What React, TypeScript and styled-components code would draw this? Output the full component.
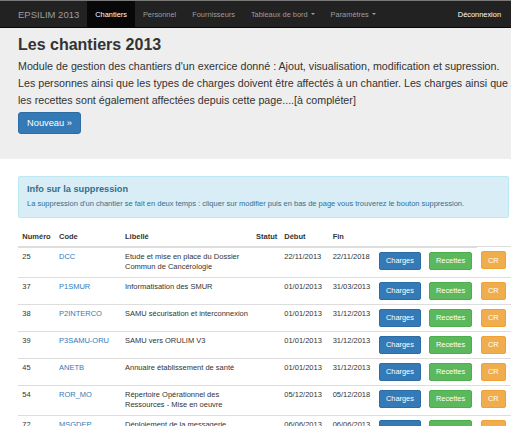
import React from "react";
import styled, { createGlobalStyle } from "styled-components";

const Global = createGlobalStyle`
  html, body { margin: 0; padding: 0; background: #fff; }
  body {
    font-family: "Liberation Sans", Helvetica, Arial, sans-serif;
    color: #333;
    overflow: hidden;
    width: 511px;
  }
  * { box-sizing: border-box; }
`;

const Navbar = styled.nav`
  display: flex;
  align-items: stretch;
  height: 28px;
  background: #222;
  border-top: 1px solid #7a7a7a;
  border-bottom: 1px solid #080808;
  padding: 0 10px 0 18px;
  font-size: 7.4px;
`;

const Brand = styled.div`
  display: flex;
  align-items: center;
  font-size: 9.5px;
  color: #9d9d9d;
  padding-right: 8px;
`;

const NavList = styled.ul`
  display: flex;
  list-style: none;
  margin: 0;
  padding: 0;
  flex: 1;
`;

const NavItem = styled.li<{ $active?: boolean }>`
  display: flex;
  align-items: center;
  padding: 0 8px;
  color: ${(p) => (p.$active ? "#fff" : "#9d9d9d")};
  background: ${(p) => (p.$active ? "#080808" : "transparent")};
`;

const Caret = styled.span`
  display: inline-block;
  width: 0;
  height: 0;
  margin-left: 3px;
  border-top: 2px solid currentColor;
  border-left: 2px solid transparent;
  border-right: 2px solid transparent;
`;

const Logout = styled.div`
  display: flex;
  align-items: center;
  color: #fff;
`;

const Jumbotron = styled.section`
  background: #eee;
  padding: 7px 0 25px 18px;
`;

const Title = styled.h1`
  margin: 0;
  font-size: 16px;
  line-height: 20px;
  font-weight: bold;
  color: #333;
`;

const Lead = styled.p`
  margin: 3px 0 3px;
  font-size: 10.7px;
  line-height: 17px;
`;

const BigButton = styled.button`
  display: inline-flex;
  align-items: center;
  height: 22px;
  padding: 0 8px;
  font-family: inherit;
  font-size: 9.3px;
  color: #fff;
  background: #337ab7;
  border: 1px solid #2e6da4;
  border-radius: 3px;
`;

const Container = styled.main`
  padding: 17px 2px 0 18px;
`;

const Alert = styled.div`
  background: #d9edf7;
  border: 1px solid #bce8f1;
  border-radius: 2px;
  padding: 7px 8px 8px;
  color: #31708f;
  margin-bottom: 11px;
`;

const AlertTitle = styled.h4`
  margin: 0 0 3px;
  font-size: 9.2px;
  line-height: 11px;
  font-weight: bold;
`;

const AlertText = styled.p`
  margin: 0;
  font-size: 7.5px;
  line-height: 11px;
`;

const Table = styled.table`
  table-layout: fixed;
  border-collapse: collapse;
  width: 499px;
  font-size: 7.5px;
  line-height: 10.5px;
`;

const Th = styled.th`
  text-align: left;
  font-weight: bold;
  padding: 3px 4.3px;
  border-bottom: 2px solid #ddd;
  vertical-align: bottom;
  white-space: nowrap;
`;

const Td = styled.td<{ $tight?: boolean }>`
  padding: ${(p) => (p.$tight ? "4px 0 4px 4.3px" : "4px 4.3px")};
  border-top: 1px solid #ddd;
  vertical-align: top;
`;

const Link = styled.a`
  color: #337ab7;
  text-decoration: none;
`;

const variants = {
  primary: { bg: "#337ab7", border: "#2e6da4" },
  success: { bg: "#5cb85c", border: "#4cae4c" },
  warning: { bg: "#f0ad4e", border: "#eea236" },
};

const Btn = styled.button<{ $variant: keyof typeof variants }>`
  display: inline-flex;
  align-items: center;
  justify-content: center;
  height: 18px;
  padding: 0 6px;
  font-family: inherit;
  font-size: 7.4px;
  color: #fff;
  background: ${(p) => variants[p.$variant].bg};
  border: 1px solid ${(p) => variants[p.$variant].border};
  border-radius: 2px;
  white-space: nowrap;
`;

const rows = [
  { num: 25, code: "DCC", label: "Etude et mise en place du Dossier Commun de Cancérologie", start: "22/11/2013", end: "22/11/2018" },
  { num: 37, code: "P1SMUR", label: "Informatisation des SMUR", start: "01/01/2013", end: "31/03/2013" },
  { num: 38, code: "P2INTERCO", label: "SAMU sécurisation et interconnexion", start: "01/01/2013", end: "31/12/2013" },
  { num: 39, code: "P3SAMU-ORU", label: "SAMU vers ORULIM V3", start: "01/01/2013", end: "31/12/2013" },
  { num: 45, code: "ANETB", label: "Annuaire établissement de santé", start: "01/01/2013", end: "31/12/2013" },
  { num: 54, code: "ROR_MO", label: "Répertoire Opérationnel des Ressources - Mise en oeuvre", start: "05/12/2013", end: "05/12/2018" },
  { num: 72, code: "MSGDEP", label: "Déploiement de la messagerie sécurisée", start: "06/06/2013", end: "06/06/2013" },
];

const colWidths = [36.7, 66, 131, 28.3, 48.4, 46.3, 50, 52, 40.3];

export default function App() {
  return (
    <>
      <Global />
      <Navbar>
        <Brand>EPSILIM 2013</Brand>
        <NavList>
          <NavItem $active>Chantiers</NavItem>
          <NavItem>Personnel</NavItem>
          <NavItem>Fournisseurs</NavItem>
          <NavItem>
            Tableaux de bord <Caret />
          </NavItem>
          <NavItem>
            Paramètres <Caret />
          </NavItem>
        </NavList>
        <Logout>Déconnexion</Logout>
      </Navbar>
      <Jumbotron>
        <Title>Les chantiers 2013</Title>
        <Lead>
          Module de gestion des chantiers d'un exercice donné : Ajout, visualisation, modification et
          supression. Les personnes ainsi que les types de charges doivent être affectés à un chantier. Les
          charges ainsi que les recettes sont également affectées depuis cette page....[à compléter]
        </Lead>
        <BigButton>Nouveau »</BigButton>
      </Jumbotron>
      <Container>
        <Alert>
          <AlertTitle>Info sur la suppression</AlertTitle>
          <AlertText>
            La suppression d'un chantier se fait en deux temps : cliquer sur modifier puis en bas de page vous
            trouverez le bouton suppression.
          </AlertText>
        </Alert>
        <Table>
          <colgroup>
            {colWidths.map((w, i) => (
              <col key={i} style={{ width: `${w}px` }} />
            ))}
          </colgroup>
          <thead>
            <tr>
              <Th>Numéro</Th>
              <Th>Code</Th>
              <Th>Libellé</Th>
              <Th>Statut</Th>
              <Th>Début</Th>
              <Th>Fin</Th>
              <Th></Th>
              <Th></Th>
            </tr>
          </thead>
          <tbody>
            {rows.map((r) => (
              <tr key={r.num}>
                <Td>{r.num}</Td>
                <Td>
                  <Link href="#">{r.code}</Link>
                </Td>
                <Td $tight>{r.label}</Td>
                <Td></Td>
                <Td>{r.start}</Td>
                <Td>{r.end}</Td>
                <Td>
                  <Btn $variant="primary">Charges</Btn>
                </Td>
                <Td>
                  <Btn $variant="success">Recettes</Btn>
                </Td>
                <Td>
                  <Btn $variant="warning">CR</Btn>
                </Td>
              </tr>
            ))}
          </tbody>
        </Table>
      </Container>
    </>
  );
}
